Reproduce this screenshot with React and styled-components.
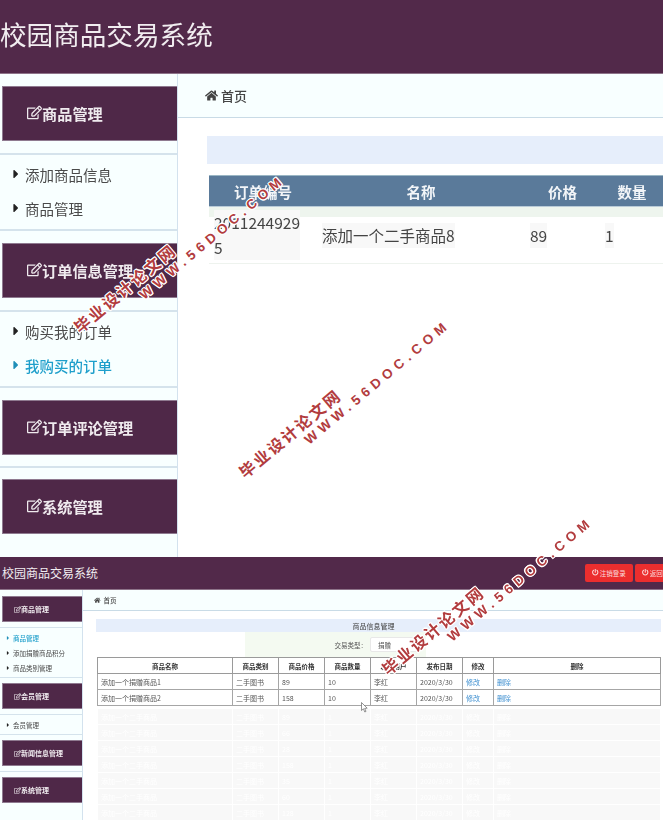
import React from 'react'
import styled, { createGlobalStyle, ThemeProvider } from 'styled-components'
import { FaRegEdit, FaHome, FaCaretRight, FaPowerOff } from 'react-icons/fa'

const Global = createGlobalStyle`
body{
margin:0;
background:#fff;
font-family:"Noto Sans CJK SC","Liberation Sans",sans-serif;
}
#root{
width:663px;
height:829px;
overflow:hidden;
}
`

const bigShot = {
    height:557, blur:0.35,
    headH:74, headBottom:6, titleSize:26.6, titleX:0,
    sideW:178, sideTop:12, barH:55, barLift:2, barSize:15.2, barPad:24, barGap:12, emptyGap:11, iconSize:15,
    lineW:2, itemH:34, itemLift:2, listPad:3, itemSize:14.5, itemPad:9, caret:14, caretGap:2,
    crumbH:44, crumbSize:13, crumbPad:27,
}
const smallShot = {
    height:263, blur:0.4,
    headH:33, headBottom:1, titleSize:12, titleX:2,
    sideW:83, sideTop:6, barH:26, barLift:0, barSize:7, barPad:11, barGap:5, emptyGap:5, iconSize:7,
    lineW:1, itemH:15, itemLift:0, listPad:2, itemSize:6.5, itemPad:5, caret:6, caretGap:2,
    crumbH:21, crumbSize:6.5, crumbPad:11,
}

const Page = styled.div`
position:relative;
width:663px;
height:829px;
overflow:hidden;
`
const Shot = styled.section`
display:flex;
flex-direction:column;
width:663px;
height:${p=>p.theme.height}px;
overflow:hidden;
filter:blur(${p=>p.theme.blur}px);
`
const Header = styled.header`
flex:none;
display:flex;
align-items:center;
justify-content:space-between;
height:${p=>p.theme.headH}px;
padding-left:${p=>p.theme.titleX}px;
padding-bottom:${p=>p.theme.headBottom}px;
background:#52294a;
border-bottom:1px solid #8d7389;
box-sizing:border-box;
`
const Title = styled.div`
color:#f1edf0;
font-size:${p=>p.theme.titleSize}px;
white-space:nowrap;
`
const HeadButtons = styled.div`
display:flex;
gap:2px;
margin-right:-20px;
`
const RedButton = styled.button`
display:flex;
align-items:center;
justify-content:center;
gap:1px;
width:48px;
height:18px;
padding:0;
border:none;
border-radius:2px;
background:#ec2e2e;
color:#fbdcdc;
font-family:inherit;
font-size:6.5px;
`
const Body = styled.div`
flex:1;
display:flex;
min-height:0;
`
const Side = styled.aside`
flex:none;
width:${p=>p.theme.sideW}px;
padding-top:${p=>p.theme.sideTop}px;
box-sizing:border-box;
background:#f8ffff;
border-right:1px solid #d3e2ee;
`
const Bar = styled.div`
display:flex;
align-items:center;
height:${p=>p.theme.barH}px;
margin-left:2px;
padding-left:${p=>p.theme.barPad}px;
padding-bottom:${p=>p.theme.barLift}px;
box-sizing:border-box;
background:#4f2848;
border:1px solid #8f7a90;
border-right:none;
color:#efeaee;
font-size:${p=>p.theme.barSize}px;
font-weight:700;
svg{
font-size:${p=>p.theme.iconSize}px;
flex:none;
}
`
const Menu = styled.ul`
list-style:none;
margin:${p=>p.theme.barGap}px 0;
padding:${p=>p.theme.listPad}px 0;
border-top:${p=>p.theme.lineW}px solid #d5e3ec;
border-bottom:${p=>p.theme.lineW}px solid #d5e3ec;
`
const EmptyMenu = styled.div`
margin:${p=>p.theme.emptyGap}px 0;
border-top:${p=>p.theme.lineW}px solid #d5e3ec;
`
const Item = styled.li`
display:flex;
align-items:center;
gap:${p=>p.theme.caretGap}px;
height:${p=>p.theme.itemH}px;
padding-left:${p=>p.theme.itemPad}px;
padding-bottom:${p=>p.theme.itemLift}px;
box-sizing:border-box;
color:${p=>p.$active ? '#1f9fcb' : '#4a4a4a'};
font-size:${p=>p.theme.itemSize}px;
font-weight:${p=>p.$active ? 500 : 400};
svg{
font-size:${p=>p.theme.caret}px;
color:${p=>p.$active ? '#1f8fb8' : '#222'};
flex:none;
}
`
const Main = styled.main`
flex:1;
min-width:0;
background:#fff;
`
const Crumb = styled.div`
display:flex;
align-items:center;
gap:3px;
height:${p=>p.theme.crumbH}px;
padding-left:${p=>p.theme.crumbPad}px;
box-sizing:border-box;
background:#f8ffff;
border-bottom:1px solid #c9dbe6;
color:#444;
font-size:${p=>p.theme.crumbSize}px;
font-weight:500;
`
const BigContent = styled.div`
padding:18px 0 0 29px;
`
const BlueStrip = styled.div`
height:28px;
background:#e6eefb;
`
const OrderRow = styled.div`
display:grid;
grid-template-columns:108px 208px 75px 64px;
margin:11px 0 0 2px;
`
const OrderHead = styled.div`
display:flex;
align-items:center;
justify-content:center;
height:32px;
background:#5a7a9a;
border-top:1px solid #9ab6c4;
border-bottom:1px solid #b9cbd8;
box-sizing:border-box;
color:#f2f5f8;
font-size:14.5px;
font-weight:700;
`
const OrderCell = styled.div`
display:flex;
align-items:center;
height:57px;
padding-left:5px;
box-sizing:border-box;
background:linear-gradient(#eef5ee 10px,#fff 10px);
border-bottom:1px solid #eef3ee;
color:#444;
font-size:15.5px;
line-height:25px;
`
const OrderText = styled.span`
background:#f8f8f8;
`
const SmallContent = styled.div`
padding:8px 2px 0 13px;
`
const SmallStrip = styled.div`
display:flex;
align-items:center;
justify-content:center;
height:13px;
padding-right:10px;
background:#e6eefb;
color:#444;
font-size:7px;
`
const FilterRow = styled.div`
display:flex;
align-items:center;
justify-content:flex-end;
gap:3px;
height:25px;
padding-right:241px;
background:linear-gradient(90deg,#fff 0 149px,#f4faf1 149px 330px,#fff 330px);
color:#555;
font-size:6.5px;
`
const TypeSelect = styled.div`
display:flex;
align-items:center;
width:50px;
height:15px;
padding-left:7px;
box-sizing:border-box;
background:#fff;
border:1px solid #e8e8e8;
border-radius:2px;
`
const GoodsTable = styled.table`
width:563px;
margin-left:1px;
border-collapse:collapse;
table-layout:fixed;
font-size:7px;
color:#555;
`
const HeadCell = styled.th`
height:16px;
padding:0;
box-sizing:border-box;
border:1px solid #9a9a9a;
color:#333;
font-size:6.5px;
font-weight:700;
line-height:10px;
`
const GoodsCell = styled.td`
height:16px;
padding:0 0 0 3px;
border:1px solid #a6a6a6;
box-sizing:border-box;
white-space:nowrap;
overflow:hidden;
line-height:10px;
`
const SpacerRow = styled.tr`
height:3px;
`
const GhostCell = styled.td`
height:16px;
padding:0 0 0 3px;
box-sizing:border-box;
background:#f8f8f8;
border:1px solid #fff;
color:#fff;
white-space:nowrap;
overflow:hidden;
line-height:10px;
`
const TableLink = styled.span`
color:#3e8fd0;
`
const Watermark = styled.div`
position:absolute;
left:${p=>p.$x}px;
top:${p=>p.$y}px;
transform:rotate(-40deg);
transform-origin:0 0;
white-space:nowrap;
color:#b23c3e;
font-weight:700;
text-shadow:1px 0 #fff,-1px 0 #fff,0 1px #fff,0 -1px #fff,1px 1px #fff,-1px -1px #fff,1px -1px #fff,-1px 1px #fff;
pointer-events:none;
`
const MarkCn = styled.div`
height:18px;
font-size:16px;
line-height:18px;
letter-spacing:2.2px;
`
const MarkEn = styled.div`
height:18px;
margin-left:71px;
font-family:"Liberation Sans",sans-serif;
font-size:13.5px;
line-height:18px;
letter-spacing:4.9px;
`
const Cursor = styled.svg`
position:absolute;
left:361px;
top:702px;
`

const bigMenu = [
    {title:"商品管理", items:["添加商品信息","商品管理"]},
    {title:"订单信息管理", items:["购买我的订单","我购买的订单"], active:1},
    {title:"订单评论管理", items:[]},
    {title:"系统管理"},
]
const smallMenu = [
    {title:"商品管理", items:["商品管理","添加捐赠商品积分","商品类别管理"], active:0},
    {title:"会员管理", items:["会员管理"]},
    {title:"新闻信息管理", items:[]},
    {title:"系统管理"},
]
const goods = [
    ["添加一个捐赠商品1","89"],
    ["添加一个捐赠商品2","158"],
]
const ghosts = ["89","66","28","158","35","60","128"]
const colWidths = [135,46,46,46,46,46,31,167]

function SideNav({ groups }) {
    return (
        <Side>
            {groups.map((g)=>(
                <div key={g.title}>
                    <Bar><FaRegEdit/>{g.title}</Bar>
                    {g.items && g.items.length===0 && <EmptyMenu/>}
                    {g.items && g.items.length>0 && (
                        <Menu>
                            {g.items.map((it,i)=>(
                                <Item key={it} $active={g.active===i}><FaCaretRight/>{it}</Item>
                            ))}
                        </Menu>
                    )}
                </div>
            ))}
        </Side>
    )
}

function Mark({ x, y }) {
    return (
        <Watermark $x={x} $y={y}>
            <MarkCn>毕业设计论文网</MarkCn>
            <MarkEn>WWW.56DOC.COM</MarkEn>
        </Watermark>
    )
}

export default function App() {
  return (
    <Page>
        <Global/>
        <ThemeProvider theme={bigShot}>
            <Shot>
                <Header><Title>校园商品交易系统</Title></Header>
                <Body>
                    <SideNav groups={bigMenu}/>
                    <Main>
                        <Crumb><FaHome/>首页</Crumb>
                        <BigContent>
                            <BlueStrip/>
                            <OrderRow>
                                <OrderHead>订单编号</OrderHead>
                                <OrderHead>名称</OrderHead>
                                <OrderHead>价格</OrderHead>
                                <OrderHead>数量</OrderHead>
                                <OrderCell><OrderText>2011244929<br/>5</OrderText></OrderCell>
                                <OrderCell><OrderText>添加一个二手商品8</OrderText></OrderCell>
                                <OrderCell><OrderText>89</OrderText></OrderCell>
                                <OrderCell><OrderText>1</OrderText></OrderCell>
                            </OrderRow>
                        </BigContent>
                    </Main>
                </Body>
            </Shot>
        </ThemeProvider>
        <ThemeProvider theme={smallShot}>
            <Shot>
                <Header>
                    <Title>校园商品交易系统</Title>
                    <HeadButtons>
                        <RedButton><FaPowerOff/>注销登录</RedButton>
                        <RedButton><FaPowerOff/>返回首页</RedButton>
                    </HeadButtons>
                </Header>
                <Body>
                    <SideNav groups={smallMenu}/>
                    <Main>
                        <Crumb><FaHome/>首页</Crumb>
                        <SmallContent>
                            <SmallStrip>商品信息管理</SmallStrip>
                            <FilterRow>交易类型：<TypeSelect>捐赠</TypeSelect></FilterRow>
                            <GoodsTable>
                                <colgroup>
                                    {colWidths.map((w,i)=><col key={i} style={{width:w}}/>)}
                                </colgroup>
                                <thead>
                                    <tr>
                                        {["商品名称","商品类别","商品价格","商品数量","发布用户","发布日期","修改","删除"].map((h)=>(
                                            <HeadCell key={h}>{h}</HeadCell>
                                        ))}
                                    </tr>
                                </thead>
                                <tbody>
                                    {goods.map(([name,price])=>(
                                        <tr key={name}>
                                            <GoodsCell>{name}</GoodsCell>
                                            <GoodsCell>二手图书</GoodsCell>
                                            <GoodsCell>{price}</GoodsCell>
                                            <GoodsCell>10</GoodsCell>
                                            <GoodsCell>李红</GoodsCell>
                                            <GoodsCell>2020/3/30</GoodsCell>
                                            <GoodsCell><TableLink>修改</TableLink></GoodsCell>
                                            <GoodsCell><TableLink>删除</TableLink></GoodsCell>
                                        </tr>
                                    ))}
                                    <SpacerRow/>
                                    {ghosts.map((price,i)=>(
                                        <tr key={i}>
                                            <GhostCell>添加一个二手商品</GhostCell>
                                            <GhostCell>二手图书</GhostCell>
                                            <GhostCell>{price}</GhostCell>
                                            <GhostCell>1</GhostCell>
                                            <GhostCell>李红</GhostCell>
                                            <GhostCell>2020/3/30</GhostCell>
                                            <GhostCell>修改</GhostCell>
                                            <GhostCell>删除</GhostCell>
                                        </tr>
                                    ))}
                                </tbody>
                            </GoodsTable>
                        </SmallContent>
                    </Main>
                </Body>
            </Shot>
        </ThemeProvider>
        <Mark x={70} y={322}/>
        <Mark x={235} y={467}/>
        <Mark x={378} y={664}/>
        <Cursor width="7" height="11" viewBox="0 0 7 11">
            <path d="M0.5 0.5 L0.5 8.5 L2.4 6.8 L3.8 10 L5 9.4 L3.7 6.4 L6.2 6.2 Z" fill="#fff" stroke="#666" strokeWidth="0.7"/>
        </Cursor>
    </Page>
  )
}
